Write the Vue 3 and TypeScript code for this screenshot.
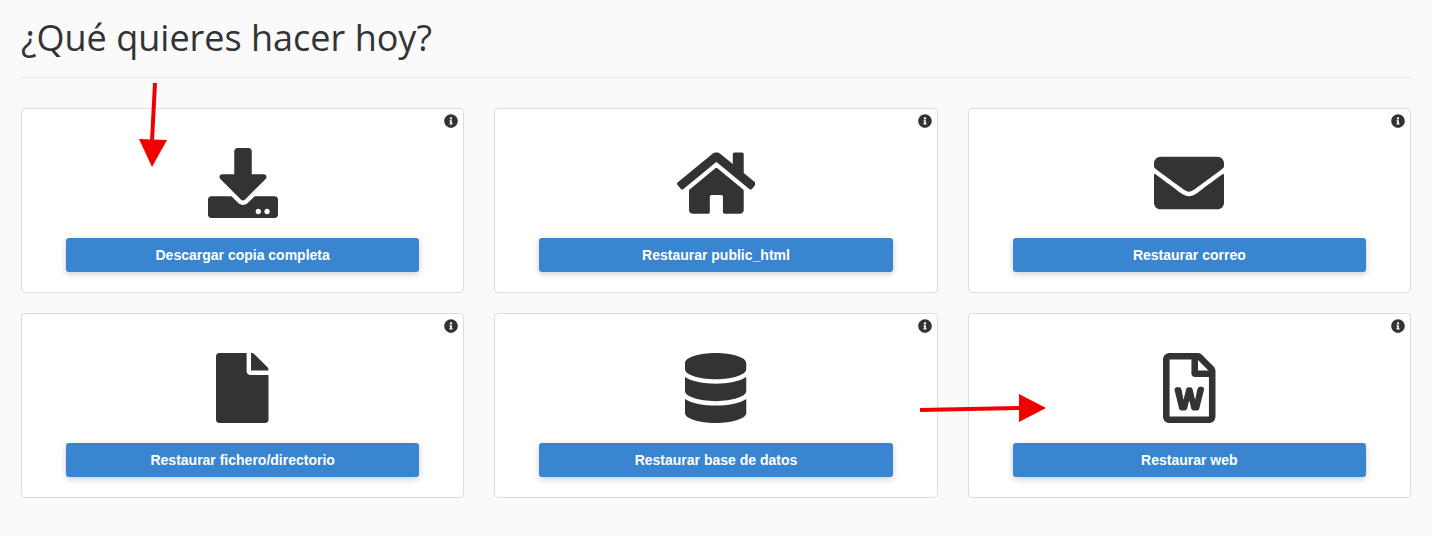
<script setup lang="ts">
interface Action {
  label: string
  viewBox: string
  width: number
  path: string
  glyph?: string
}

const infoPath =
  'M256 8C119.043 8 8 119.083 8 256c0 136.997 111.043 248 248 248s248-111.003 248-248C504 119.083 392.957 8 256 8zm0 110c23.196 0 42 18.804 42 42s-18.804 42-42 42-42-18.804-42-42 18.804-42 42-42zm56 254c0 6.627-5.373 12-12 12h-88c-6.627 0-12-5.373-12-12v-24c0-6.627 5.373-12 12-12h12v-64h-12c-6.627 0-12-5.373-12-12v-24c0-6.627 5.373-12 12-12h64c6.627 0 12 5.373 12 12v100h12c6.627 0 12 5.373 12 12v24z'

const actions: Action[] = [
  {
    label: 'Descargar copia completa',
    viewBox: '0 0 512 512',
    width: 70,
    path: 'M216 0h80c13.3 0 24 10.7 24 24v168h87.7c17.8 0 26.7 21.5 14.1 34.1L269.7 378.3c-7.5 7.5-19.8 7.5-27.3 0L90.1 226.1c-12.6-12.6-3.7-34.1 14.1-34.1H192V24c0-13.3 10.7-24 24-24zm296 376v112c0 13.3-10.7 24-24 24H24c-13.3 0-24-10.7-24-24V376c0-13.3 10.7-24 24-24h146.7l49 49c20.1 20.1 52.5 20.1 72.6 0l49-49H488c13.3 0 24 10.7 24 24zm-124 88c0-11-9-20-20-20s-20 9-20 20 9 20 20 20 20-9 20-20zm64 0c0-11-9-20-20-20s-20 9-20 20 9 20 20 20 20-9 20-20z',
  },
  {
    label: 'Restaurar public_html',
    viewBox: '0 0 576 512',
    width: 78.75,
    path: 'M488 312.7V456c0 13.3-10.7 24-24 24H348c-6.6 0-12-5.4-12-12V356c0-6.6-5.4-12-12-12h-72c-6.6 0-12 5.4-12 12v112c0 6.6-5.4 12-12 12H112c-13.3 0-24-10.7-24-24V312.7c0-3.6 1.6-7 4.4-9.3l188-154.8c4.4-3.6 10.8-3.6 15.3 0l188 154.8c2.7 2.3 4.3 5.7 4.3 9.3zm83.6-60.9L488 182.9V44.4c0-6.6-5.4-12-12-12h-56c-6.6 0-12 5.4-12 12V117l-89.5-73.7c-17.7-14.6-43.3-14.6-61 0L4.4 251.8c-5.1 4.2-5.8 11.8-1.6 16.9l25.5 31c4.2 5.1 11.8 5.8 16.9 1.6l235.2-193.7c4.4-3.6 10.8-3.6 15.3 0l235.2 193.7c5.1 4.2 12.7 3.5 16.9-1.6l25.5-31c4.2-5.2 3.4-12.7-1.7-16.9z',
  },
  {
    label: 'Restaurar correo',
    viewBox: '0 0 512 512',
    width: 70,
    path: 'M502.3 190.8c3.9-3.1 9.7-.2 9.7 4.7V400c0 26.5-21.5 48-48 48H48c-26.5 0-48-21.5-48-48V195.6c0-5 5.7-7.8 9.7-4.7 22.4 17.4 52.1 39.5 154.1 113.6 21.1 15.4 56.7 47.8 92.2 47.6 35.7.3 72-32.8 92.3-47.6 102-74.1 131.6-96.3 154-113.7zM256 320c23.2.4 56.6-29.2 73.4-41.4 132.7-96.3 142.8-104.7 173.4-128.7 5.8-4.5 9.2-11.5 9.2-18.9v-19c0-26.5-21.5-48-48-48H48C21.5 64 0 85.5 0 112v19c0 7.4 3.4 14.3 9.2 18.9 30.6 23.9 40.7 32.4 173.4 128.7 16.8 12.2 50.2 41.8 73.4 41.4z',
  },
  {
    label: 'Restaurar fichero/directorio',
    viewBox: '0 0 384 512',
    width: 52.5,
    path: 'M224 136V0H24C10.7 0 0 10.7 0 24v464c0 13.3 10.7 24 24 24h336c13.3 0 24-10.7 24-24V160H248c-13.2 0-24-10.8-24-24zm160-14.1v6.1H256V0h6.1c6.4 0 12.5 2.5 17 7l97.9 98c4.5 4.5 7 10.6 7 16.9z',
  },
  {
    label: 'Restaurar base de datos',
    viewBox: '0 0 448 512',
    width: 61.25,
    path: 'M448 73.143v45.714C448 159.143 347.667 192 224 192S0 159.143 0 118.857V73.143C0 32.857 100.333 0 224 0s224 32.857 224 73.143zM448 176v102.857C448 319.143 347.667 352 224 352S0 319.143 0 278.857V176c48.125 33.143 136.208 48.572 224 48.572S399.874 209.143 448 176zm0 160v102.857C448 479.143 347.667 512 224 512S0 479.143 0 438.857V336c48.125 33.143 136.208 48.572 224 48.572S399.874 369.143 448 336z',
  },
  {
    label: 'Restaurar web',
    viewBox: '0 0 384 512',
    width: 52.5,
    path: 'M369.9 97.9L286 14C277 5 264.8-.1 252.1-.1H48C21.5 0 0 21.5 0 48v416c0 26.5 21.5 48 48 48h288c26.5 0 48-21.5 48-48V131.9c0-12.7-5.1-25-14.1-34zM332.1 128H256V51.9l76.1 76.1zM48 464V48h160v104c0 13.3 10.7 24 24 24h104v288H48z',
    glyph: 'M268.1 256c-5.7 0-10.6 4-11.7 9.5-20.6 97.7-20.4 95.4-21 103.5-.2-1.2-.4-2.6-.7-4.3-.8-5.1.3.2-23.6-99.5-1.3-5.4-6.1-9.2-11.7-9.2h-13.3c-5.5 0-10.3 3.8-11.7 9.1-24.4 99-24 96.2-24.8 103.7-.1-1.1-.2-2.5-.5-4.2-.7-5.2-14.1-73.3-19.1-99-1.1-5.6-6-9.7-11.8-9.7h-16.8c-7.8 0-13.5 7.3-11.7 14.8 8 32.6 26.7 109.5 33.2 136 1.3 5.4 6.1 9.1 11.7 9.1h25.2c5.5 0 10.3-3.7 11.6-9.1l17.9-71.4c1.5-6.2 2.5-12 3-17.3l.3 3.2c.3 2.9.7 5.6 1.2 8.1 0 .2 1.8 7.7 17.9 77.5 1.3 5.4 6.1 9.2 11.7 9.2h25.2c5.5 0 10.3-3.7 11.6-9.1 21.2-85 30.6-122.8 35-139.7 1.9-7.6-3.8-14.9-11.6-14.9h-16.7z',
  },
]
</script>

<template>
  <main class="page">
    <h1 class="title">¿Qué quieres hacer hoy?</h1>
    <section class="grid">
      <article v-for="action in actions" :key="action.label" class="card">
        <svg class="info" viewBox="0 0 512 512" aria-hidden="true"><path :d="infoPath" /></svg>
        <svg class="icon" :viewBox="action.viewBox" :style="{ width: action.width + 'px' }" aria-hidden="true">
          <path :d="action.path" />
          <path v-if="action.glyph" class="glyph" :d="action.glyph" />
        </svg>
        <button class="btn" type="button">{{ action.label }}</button>
      </article>
    </section>
    <svg class="arrows" viewBox="0 0 1432 536" aria-hidden="true">
      <path class="shaft" d="M155 83 L152 141" />
      <path class="head" d="M139 139 L167 140 L152 167 Z" />
      <path class="shaft" d="M920 410 L1021 408" />
      <path class="head" d="M1019 394 L1046 408 L1019 422 Z" />
    </svg>
  </main>
</template>

<style>
html,
body {
  margin: 0;
  background: #fafafa;
}
</style>

<style scoped>
.page {
  position: relative;
  box-sizing: border-box;
  width: 1432px;
  height: 536px;
  padding: 0 21px;
  overflow: hidden;
  background: #fafafa;
}

.title {
  box-sizing: border-box;
  height: 78px;
  margin: 0 0 30px;
  padding-top: 13px;
  border-bottom: 1px solid #ececec;
  color: #333;
  font-family: "Open Sans", sans-serif;
  font-size: 36px;
  font-weight: 400;
  line-height: 49px;
}

.grid {
  display: grid;
  grid-template-columns: repeat(3, 1fr);
  gap: 20px 30px;
}

.card {
  position: relative;
  box-sizing: border-box;
  height: 185px;
  padding: 39px 0 20px;
  display: flex;
  flex-direction: column;
  align-items: center;
  gap: 20px;
  background: #fff;
  border: 1px solid #ddd;
  border-radius: 4px;
}

.info {
  position: absolute;
  top: 5px;
  right: 5px;
  width: 14px;
  height: 14px;
  fill: #333;
}

.icon {
  display: block;
  flex: none;
  height: 70px;
  fill: #333;
}

.glyph {
  stroke: #333;
  stroke-width: 10;
}

.btn {
  width: 80%;
  height: 34px;
  padding: 0;
  border: 0;
  border-radius: 3px;
  background: #3a85cf;
  box-shadow: 0 2px 6px rgba(0, 0, 0, 0.2);
  color: #fff;
  font-family: "Liberation Sans", Arial, sans-serif;
  font-size: 14px;
  font-weight: 700;
}

.arrows {
  position: absolute;
  inset: 0;
  width: 1432px;
  height: 536px;
  pointer-events: none;
}

.shaft {
  fill: none;
  stroke: #f00000;
  stroke-width: 4;
}

.head {
  fill: #f00000;
}
</style>
